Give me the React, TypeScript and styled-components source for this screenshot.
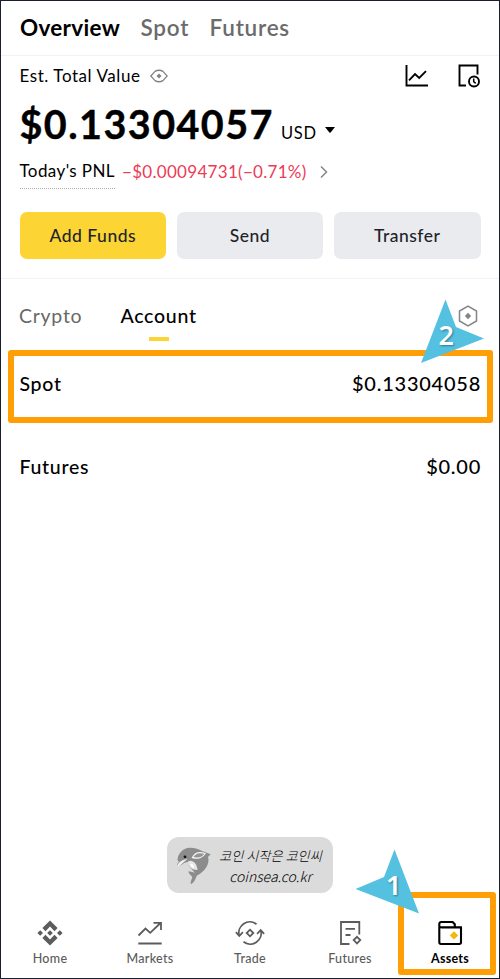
import React from 'react';
import styled, { createGlobalStyle } from 'styled-components';

const GlobalStyle = createGlobalStyle`
  *, *::before, *::after { box-sizing: border-box; }
  body { margin: 0; background: #fff; }
`;

const Screen = styled.div`
  position: relative;
  display: flex;
  flex-direction: column;
  width: 500px;
  height: 979px;
  border: 1px solid #1b1e2e;
  background: #fff;
  color: #000;
  font-family: Lato, 'Noto Sans', sans-serif;
  white-space: nowrap;
  overflow: hidden;
`;

const Header = styled.header`
  display: flex;
  align-items: center;
  gap: 20.5px;
  height: 55px;
  padding: 0 0 1px 19px;
  border-bottom: 1px solid #f2f2f2;
`;

const HeaderTab = styled.span<{ $active?: boolean }>`
  font-size: 22.5px;
  line-height: 28px;
  font-weight: ${(p) => (p.$active ? 700 : 600)};
  letter-spacing: ${(p) => (p.$active ? 0.3 : 0.75)}px;
  color: ${(p) => (p.$active ? '#000' : '#6b6b6b')};
`;

const Summary = styled.section`
  display: flex;
  flex-direction: column;
  height: 223px;
  padding: 0 18.5px;
  border-bottom: 1px solid #f2f2f2;
`;

const SummaryTop = styled.div`
  display: flex;
  align-items: center;
  height: 39px;
`;

const EstLabel = styled.span`
  margin-right: 9px;
  font-size: 17px;
  letter-spacing: 0.57px;
`;

const Tools = styled.div`
  display: flex;
  gap: 28px;
  margin-left: auto;
`;

const TotalRow = styled.div`
  display: flex;
  align-items: baseline;
  height: 57px;
  padding-top: 4px;
`;

const Total = styled.span`
  font-size: 39.5px;
  line-height: 50px;
  font-weight: 700;
  letter-spacing: 1.45px;
  -webkit-text-stroke: 0.4px #000;
`;

const Currency = styled.span`
  margin: 0 8px 0 7px;
  font-size: 16.5px;
  letter-spacing: 0.8px;
  font-weight: 400;
`;

const Caret = styled.svg`
  align-self: center;
  margin-top: 8px;
`;

const PnlRow = styled.div`
  display: flex;
  align-items: center;
  height: 39px;
`;

const PnlLabel = styled.span`
  height: 35px;
  margin-right: 7px;
  font-size: 17px;
  line-height: 34px;
  letter-spacing: 0.4px;
  border-bottom: 1px dotted #aaa;
`;

const PnlValue = styled.span`
  margin-right: 13px;
  font-size: 17px;
  line-height: 34px;
  letter-spacing: 0.3px;
  color: #ee3a55;
`;

const Actions = styled.div`
  display: grid;
  grid-template-columns: repeat(3, 1fr);
  gap: 10.5px;
  margin-top: 21px;
`;

const Action = styled.button<{ $primary?: boolean }>`
  height: 47px;
  padding: 0 0 1px;
  border: 0;
  border-radius: 7px;
  background: ${(p) => (p.$primary ? '#fcd535' : '#eaebef')};
  color: #1e2329;
  font: 500 17.5px Lato, sans-serif;
  letter-spacing: 0.5px;
`;

const AccountTabs = styled.div`
  display: flex;
  align-items: flex-start;
  height: 71px;
  padding: 24px 21.5px 0 18px;
`;

const AccountTab = styled.span<{ $active?: boolean }>`
  display: flex;
  flex-direction: column;
  align-items: center;
  margin-right: 38px;
  font-size: 19.5px;
  line-height: 26px;
  letter-spacing: 0.75px;
  font-weight: ${(p) => (p.$active ? 500 : 400)};
  color: ${(p) => (p.$active ? '#000' : '#686868')};
  &::after {
    content: '';
    width: 20px;
    height: 4px;
    margin-top: 8px;
    background: ${(p) => (p.$active ? '#fcd535' : 'transparent')};
  }
`;

const Preferences = styled.svg`
  margin: 2px 0 0 auto;
`;

const AccountRow = styled.div<{ $highlighted?: boolean }>`
  display: flex;
  align-items: center;
  justify-content: space-between;
  flex: none;
  height: 73px;
  margin: 0 6px 0 7px;
  padding: ${(p) => (p.$highlighted ? '0 6px 7px 5.5px' : '0 12px 7px 11.5px')};
  font-size: 19.5px;
  font-weight: 500;
  letter-spacing: 0.7px;
  border: ${(p) => (p.$highlighted ? '6px solid #ff9f05' : '0')};
  border-radius: 3px;
  & + & { margin-top: 10px; }
`;

const Amount = styled.span`
  font-size: 20px;
  letter-spacing: 0.75px;
`;

const Watermark = styled.aside`
  display: flex;
  align-items: center;
  width: 166px;
  height: 56px;
  margin: auto auto 0 166px;
  padding: 2px 0 0 8px;
  gap: 7px;
  border-radius: 12px;
  background: #dbdbdb;
`;

const WatermarkText = styled.div`
  display: flex;
  flex-direction: column;
  align-items: center;
  font: italic 300 13.2px/21px 'Noto Sans CJK KR', sans-serif;
  color: #000;
`;

const SiteName = styled.span`
  font-size: 14px;
`;

const Nav = styled.nav`
  display: grid;
  grid-template-columns: repeat(5, 100px);
  flex: none;
  height: 85px;
  margin-left: -1px;
  padding-top: 27px;
`;

const NavItem = styled.div<{ $active?: boolean }>`
  display: flex;
  flex-direction: column;
  align-items: center;
  font-size: 12.5px;
  line-height: 16px;
  font-weight: ${(p) => (p.$active ? 700 : 500)};
  letter-spacing: ${(p) => (p.$active ? 0.25 : 0.3)}px;
  color: ${(p) => (p.$active ? '#000' : '#5c5c5c')};
  svg { margin-bottom: 5px; }
`;

const AssetsHighlight = styled.div`
  position: absolute;
  left: 397px;
  top: 891px;
  width: 98px;
  height: 83px;
  border: 6px solid #ff9f05;
  border-radius: 3px;
`;

const Pointer = styled.div<{ $x: number; $y: number }>`
  position: absolute;
  left: ${(p) => p.$x}px;
  top: ${(p) => p.$y}px;
  width: 64px;
  height: 65px;
  svg { display: block; }
`;

const PointerNumber = styled.span<{ $x: number; $y: number }>`
  position: absolute;
  left: ${(p) => p.$x}px;
  top: ${(p) => p.$y}px;
  font: 600 27px/27px 'Noto Sans', sans-serif;
  color: #fff;
  text-shadow: 1px 1px 2px rgba(20, 70, 100, 0.6);
`;

const EyeIcon = () => (
  <svg width="18" height="14" viewBox="0 0 18 14" fill="none" stroke="#828282" strokeWidth="1.3">
    <path d="M.8 7 5 2.4Q9 .1 13 2.4L17.2 7 13 11.6Q9 13.9 5 11.6Z" />
    <path d="M9 4.5 11.5 7 9 9.5 6.5 7Z" fill="#828282" stroke="none" />
  </svg>
);

const ChartIcon = () => (
  <svg width="24" height="24" viewBox="0 0 24 24" fill="none" stroke="#000" strokeWidth="1.9">
    <path d="M1.5 1v20.5H23M4 16.3 10 10l4.2 4L21 7.2" />
  </svg>
);

const HistoryIcon = () => (
  <svg width="24" height="24" viewBox="0 0 24 24" fill="none" stroke="#000" strokeWidth="1.9">
    <path d="M9 21.5H2.5v-20h18V10.500" />
    <circle cx="17" cy="17.5" r="5" />
    <path d="M16.7 14.5V17.7l2 1.6" strokeWidth="1.5" />
  </svg>
);

const HomeIcon = () => (
  <svg width="26" height="26" viewBox="0 0 26 26" fill="#5c5c5c">
    <path d="M13 .5 20.6 8.1 17.5 11.2 13 6.6 8.5 11.2 5.400 8.1ZM13 25.5 20.6 17.9 17.5 14.8 13 19.4 8.5 14.8 5.400 17.9ZM3.2 10.2 6 13 3.2 15.8.4 13ZM13 10.2 15.8 13 13 15.8 10.2 13ZM22.8 10.2 25.6 13 22.8 15.8 20 13Z" />
  </svg>
);

const MarketsIcon = () => (
  <svg width="26" height="26" viewBox="0 0 26 26" fill="none" stroke="#5c5c5c" strokeWidth="1.8">
    <path d="M1.5 15.5 8.5 8.5 13.2 12.8 23.5 3M16.5 2.8H24V10M1.3 23.5H24.7" />
  </svg>
);

const TradeIcon = () => (
  <svg width="30" height="26" viewBox="0 0 30 26" fill="none" stroke="#5c5c5c" strokeWidth="1.8">
    <path d="M21.5 4.2A11 11 0 0 0 4.2 15.8M.9 12.2 4.3 16 7.9 12.2M8.5 21.8A11 11 0 0 0 25.8 10.2M22.1 13.8 25.7 10 29.1 13.8" />
    <path d="M15 9.7 18.3 13 15 16.3 11.7 13Z" />
  </svg>
);

const FuturesIcon = () => (
  <svg width="26" height="26" viewBox="0 0 26 26" fill="none" stroke="#5c5c5c" strokeWidth="1.8">
    <path d="M12.5 24H4V2H22.3V14.5M8.5 8.8H18M8.5 15H13.5" />
    <path d="M20 16.8 23.3 20.1 20 23.4 16.7 20.1Z" />
  </svg>
);

const AssetsIcon = () => (
  <svg width="26" height="26" viewBox="0 0 26 26" fill="none" stroke="#000" strokeWidth="2.1">
    <path d="M24 7.4V22.3Q24 24 22.3 24H4Q2.3 24 2.3 22.3V4Q2.3 2 4.3 2H15.6L17.8 4.2V7.4M2.3 6Q2.8 7.4 4.5 7.4H25" />
    <path d="M17 11.2 21.2 15.4 17 19.6 12.8 15.4Z" fill="#f0b90b" stroke="none" />
  </svg>
);

const Dolphin = () => (
  <svg width="37" height="40" viewBox="0 0 37 40">
    <path d="M2.500 14C2.500 8 8 1.700 15 1.700 20 1.600 24 3 27 5L35.700 8.300 33 11C35 17 31 25 22 29.500 20.500 32 20 36 16 38.300 15 36 17 33 17.300 31 16 29 14 28 13.300 25.500 16 25.500 18 26 20 27L14 20 13 16Q9 16 7 18.500L2.300 20.700Q1.300 18 4 16Z" fill="#8c8c8c" />
    <path d="M2 20C4 15.500 8 13.500 12.500 13 10 14.500 8 17.500 2.500 21Z" fill="#f2f2f2" />
    <path d="M13 15.500C17 13 22 17 22.500 24 17 24 13 21 13 15.500Z" fill="#e6e6e6" />
    <path d="M15.500 18C17 17 19 19 19 22 17 22 15.500 20 15.500 18Z" fill="#fff" />
    <path d="M17.500 11.500C20 6.500 24 5.500 30 7.500 28 11.500 23 13 17.500 11.500Z" fill="#949494" stroke="#f2f2f2" strokeWidth="1.300" />
    <circle cx="10" cy="10.800" r="1.400" fill="#111" />
  </svg>
);

const navItems = [
  { label: 'Home', Icon: HomeIcon },
  { label: 'Markets', Icon: MarketsIcon },
  { label: 'Trade', Icon: TradeIcon },
  { label: 'Futures', Icon: FuturesIcon },
  { label: 'Assets', Icon: AssetsIcon, active: true },
];

export default function App() {
  return (
    <>
      <GlobalStyle />
      <Screen>
        <Header>
          <HeaderTab $active>Overview</HeaderTab>
          <HeaderTab>Spot</HeaderTab>
          <HeaderTab>Futures</HeaderTab>
        </Header>
        <Summary>
          <SummaryTop>
            <EstLabel>Est. Total Value</EstLabel>
            <EyeIcon />
            <Tools>
              <ChartIcon />
              <HistoryIcon />
            </Tools>
          </SummaryTop>
          <TotalRow>
            <Total>$0.13304057</Total>
            <Currency>USD</Currency>
            <Caret width="10" height="6" viewBox="0 0 10 6">
              <path d="M0 0H10L5.600 5.500Q5 6 4.400 5.500Z" />
            </Caret>
          </TotalRow>
          <PnlRow>
            <PnlLabel>Today's PNL</PnlLabel>
            <PnlValue>−$0.00094731(−0.71%)</PnlValue>
            <svg width="8" height="14" viewBox="0 0 8 14" fill="none" stroke="#858585" strokeWidth="1.500">
              <path d="M1 1.500 6.500 7 1 12.500" />
            </svg>
          </PnlRow>
          <Actions>
            <Action $primary>Add Funds</Action>
            <Action>Send</Action>
            <Action>Transfer</Action>
          </Actions>
        </Summary>
        <AccountTabs>
          <AccountTab>Crypto</AccountTab>
          <AccountTab $active>Account</AccountTab>
          <Preferences width="20" height="22" viewBox="0 0 20 22" fill="none" stroke="#858585" strokeWidth="1.500">
            <path d="M10 1.200 18.500 6V16L10 20.800 1.500 16V6Z" />
            <path d="M10 7.800 13.200 11 10 14.200 6.800 11Z" fill="#858585" stroke="none" />
          </Preferences>
        </AccountTabs>
        <AccountRow $highlighted>
          <span>Spot</span>
          <Amount>$0.13304058</Amount>
        </AccountRow>
        <AccountRow>
          <span>Futures</span>
          <Amount>$0.00</Amount>
        </AccountRow>
        <Watermark>
          <Dolphin />
          <WatermarkText>
            <span>코인 시작은 코인씨</span>
            <SiteName>coinsea.co.kr</SiteName>
          </WatermarkText>
        </Watermark>
        <Nav>
          {navItems.map(({ label, Icon, active }) => (
            <NavItem key={label} $active={active}>
              <Icon />
              {label}
            </NavItem>
          ))}
        </Nav>
        <AssetsHighlight />
        <Pointer $x={420} $y={298}>
          <svg width="64" height="65" viewBox="0 0 64 65">
            <path d="M24.500.500 35 28 63 39.500 0 64Z" fill="#54c1e0" />
          </svg>
          <PointerNumber $x={17.500} $y={22}>2</PointerNumber>
        </Pointer>
        <Pointer $x={354} $y={848}>
          <svg width="64" height="65" viewBox="0 0 64 65">
            <path d="M39.500.500 29 28 .500 40 64 64.500Z" fill="#54c1e0" />
          </svg>
          <PointerNumber $x={31} $y={22}>1</PointerNumber>
        </Pointer>
      </Screen>
    </>
  );
}
